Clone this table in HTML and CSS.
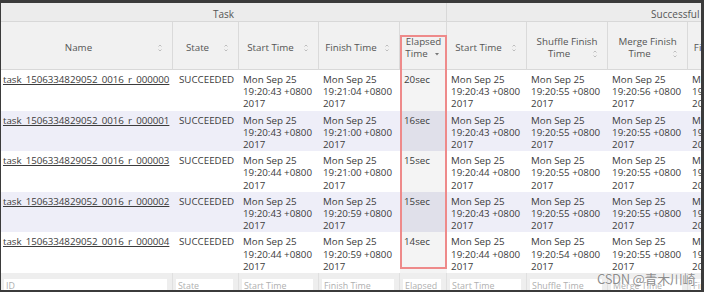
FILE: index.html
```html
<!DOCTYPE html>
<html>
<head>
<meta charset="utf-8">
<link rel="stylesheet" href="styles.css">
</head>
<body>
<div class="frame">
  <table class="grid">
    <colgroup>
      <col class="c-name"><col class="c-state"><col class="c-time"><col class="c-time2"><col class="c-el">
      <col class="c-time"><col class="c-time2"><col class="c-time"><col class="c-time"><col class="c-el"><col class="c-x1"><col class="c-x2">
    </colgroup>
    <thead>
      <tr class="grp">
        <th colspan="5">Task</th>
        <th colspan="7">Successful Attempt</th>
      </tr>
      <tr class="hdr">
        <th><div class="sw">Name<span class="ic"><svg width="16" height="12" viewBox="0 0 16 12"><path d="M6.5 4.5 L8 3 L9.5 4.5 M6.5 7.5 L8 9 L9.5 7.5" fill="none" stroke="#b8b8b8" stroke-width="0.9"/></svg></span></div></th>
        <th><div class="sw">State<span class="ic"><svg width="16" height="12" viewBox="0 0 16 12"><path d="M6.5 4.5 L8 3 L9.5 4.5 M6.5 7.5 L8 9 L9.5 7.5" fill="none" stroke="#b8b8b8" stroke-width="0.9"/></svg></span></div></th>
        <th><div class="sw">Start Time<span class="ic"><svg width="16" height="12" viewBox="0 0 16 12"><path d="M6.5 4.5 L8 3 L9.5 4.5 M6.5 7.5 L8 9 L9.5 7.5" fill="none" stroke="#b8b8b8" stroke-width="0.9"/></svg></span></div></th>
        <th><div class="sw">Finish Time<span class="ic"><svg width="16" height="12" viewBox="0 0 16 12"><path d="M6.5 4.5 L8 3 L9.5 4.5 M6.5 7.5 L8 9 L9.5 7.5" fill="none" stroke="#b8b8b8" stroke-width="0.9"/></svg></span></div></th>
        <th class="elh"><div class="sw">Elapsed Time<span class="ic ic-s"><svg width="14" height="12" viewBox="0 0 14 12"><path d="M5 5 L9 5 L7 7.5 Z" fill="#777"/></svg></span></div></th>
        <th><div class="sw">Start Time<span class="ic"><svg width="16" height="12" viewBox="0 0 16 12"><path d="M6.5 4.5 L8 3 L9.5 4.5 M6.5 7.5 L8 9 L9.5 7.5" fill="none" stroke="#b8b8b8" stroke-width="0.9"/></svg></span></div></th>
        <th><div class="sw">Shuffle Finish Time<span class="ic"><svg width="16" height="12" viewBox="0 0 16 12"><path d="M6.5 4.5 L8 3 L9.5 4.5 M6.5 7.5 L8 9 L9.5 7.5" fill="none" stroke="#b8b8b8" stroke-width="0.9"/></svg></span></div></th>
        <th><div class="sw">Merge Finish Time<span class="ic"><svg width="16" height="12" viewBox="0 0 16 12"><path d="M6.5 4.5 L8 3 L9.5 4.5 M6.5 7.5 L8 9 L9.5 7.5" fill="none" stroke="#b8b8b8" stroke-width="0.9"/></svg></span></div></th>
        <th><div class="sw">Finish Time<span class="ic"><svg width="16" height="12" viewBox="0 0 16 12"><path d="M6.5 4.5 L8 3 L9.5 4.5 M6.5 7.5 L8 9 L9.5 7.5" fill="none" stroke="#b8b8b8" stroke-width="0.9"/></svg></span></div></th>
        <th><div class="sw">Elapsed Time</div></th>
        <th><div class="sw">Shuffle Time</div></th>
        <th><div class="sw">Merge Time</div></th>
      </tr>
    </thead>
    <tbody>
      <tr class="row odd">
        <td class="name"><a href="#">task_1506334829052_0016_r_000000</a></td>
        <td class="st">SUCCEEDED</td>
        <td>Mon Sep 25 19:20:43 +0800 2017</td>
        <td>Mon Sep 25 19:21:04 +0800 2017</td>
        <td class="el">20sec</td>
        <td>Mon Sep 25 19:20:43 +0800 2017</td>
        <td>Mon Sep 25 19:20:55 +0800 2017</td>
        <td>Mon Sep 25 19:20:56 +0800 2017</td>
        <td>Mon Sep 25 19:21:04 +0800 2017</td>
        <td>8sec</td><td>1sec</td><td>8sec</td>
      </tr>
      <tr class="row even">
        <td class="name"><a href="#">task_1506334829052_0016_r_000001</a></td>
        <td class="st">SUCCEEDED</td>
        <td>Mon Sep 25 19:20:43 +0800 2017</td>
        <td>Mon Sep 25 19:21:00 +0800 2017</td>
        <td class="el">16sec</td>
        <td>Mon Sep 25 19:20:43 +0800 2017</td>
        <td>Mon Sep 25 19:20:55 +0800 2017</td>
        <td>Mon Sep 25 19:20:55 +0800 2017</td>
        <td>Mon Sep 25 19:21:00 +0800 2017</td>
        <td>12sec</td><td>0sec</td><td>4sec</td>
      </tr>
      <tr class="row odd">
        <td class="name"><a href="#">task_1506334829052_0016_r_000003</a></td>
        <td class="st">SUCCEEDED</td>
        <td>Mon Sep 25 19:20:44 +0800 2017</td>
        <td>Mon Sep 25 19:21:00 +0800 2017</td>
        <td class="el">15sec</td>
        <td>Mon Sep 25 19:20:44 +0800 2017</td>
        <td>Mon Sep 25 19:20:55 +0800 2017</td>
        <td>Mon Sep 25 19:20:55 +0800 2017</td>
        <td>Mon Sep 25 19:21:00 +0800 2017</td>
        <td>11sec</td><td>0sec</td><td>4sec</td>
      </tr>
      <tr class="row even">
        <td class="name"><a href="#">task_1506334829052_0016_r_000002</a></td>
        <td class="st">SUCCEEDED</td>
        <td>Mon Sep 25 19:20:43 +0800 2017</td>
        <td>Mon Sep 25 19:20:59 +0800 2017</td>
        <td class="el">15sec</td>
        <td>Mon Sep 25 19:20:43 +0800 2017</td>
        <td>Mon Sep 25 19:20:55 +0800 2017</td>
        <td>Mon Sep 25 19:20:55 +0800 2017</td>
        <td>Mon Sep 25 19:20:59 +0800 2017</td>
        <td>12sec</td><td>0sec</td><td>3sec</td>
      </tr>
      <tr class="row odd">
        <td class="name"><a href="#">task_1506334829052_0016_r_000004</a></td>
        <td class="st">SUCCEEDED</td>
        <td>Mon Sep 25 19:20:44 +0800 2017</td>
        <td>Mon Sep 25 19:20:59 +0800 2017</td>
        <td class="el">14sec</td>
        <td>Mon Sep 25 19:20:44 +0800 2017</td>
        <td>Mon Sep 25 19:20:54 +0800 2017</td>
        <td>Mon Sep 25 19:20:55 +0800 2017</td>
        <td>Mon Sep 25 19:20:59 +0800 2017</td>
        <td>10sec</td><td>0sec</td><td>4sec</td>
      </tr>
    </tbody>
    <tfoot>
      <tr class="flt">
        <td><input class="fi" placeholder="ID"></td>
        <td><input class="fi" placeholder="State"></td>
        <td><input class="fi" placeholder="Start Time"></td>
        <td><input class="fi" placeholder="Finish Time"></td>
        <td><input class="fi" placeholder="Elapsed"></td>
        <td><input class="fi" placeholder="Start Time"></td>
        <td><input class="fi" placeholder="Shuffle Time"></td>
        <td><input class="fi" placeholder="Merge Time"></td>
        <td><input class="fi" placeholder="Finish Time"></td>
        <td><input class="fi" placeholder="Elapsed"></td>
        <td><input class="fi" placeholder="Shuffle"></td>
        <td><input class="fi" placeholder="Merge"></td>
      </tr>
    </tfoot>
  </table>
  <div class="mark"></div>
  <div class="wm">CSDN @青木川崎</div>
</div>
</body>
</html>
```
FILE: styles.css
```css
html, body {
  margin: 0;
  padding: 0;
  background: #ffffff;
}

.frame {
  position: relative;
  width: 700px;
  height: 287px;
  border-style: solid;
  border-color: #3b3b3b;
  border-width: 3px 3px 2px 1px;
  overflow: hidden;
  background: #ffffff;
}

.grid {
  table-layout: fixed;
  width: 944px;
  border-collapse: separate;
  border-spacing: 0;
  font-family: "Open Sans", "Liberation Sans", sans-serif;
  font-size: 9.75px;
  line-height: 12.2px;
  color: #3c3c3c;
}

.c-name { width: 172px; }
.c-state { width: 66px; }
.c-time { width: 80px; }
.c-time2 { width: 81px; }
.c-el { width: 47px; }
.c-x1 { width: 60px; }
.c-x2 { width: 70px; }

.grp th {
  height: 19px;
  padding: 5px 0 0 0;
  box-sizing: border-box;
  font-weight: normal;
  color: #555;
  background: #ececec;
  border-bottom: 1px solid #d8d8d8;
  border-right: 1px solid #d8d8d8;
  text-align: center;
  font-size: 10px;
}

.hdr th {
  height: 48px;
  box-sizing: border-box;
  padding: 5px 4px 0 4px;
  font-weight: normal;
  color: #555;
  background: #f1f1f1;
  border-right: 1px solid #dadada;
  border-bottom: 1px solid #d8d8d8;
  vertical-align: middle;
  text-align: center;
}

.hdr th.elh {
  padding: 5px 2px 0 3px;
}

.sw {
  text-align: center;
}

.ic {
  float: right;
  width: 16px;
  height: 12px;
}

.ic.ic-s {
  width: 14px;
}

.ic svg {
  display: block;
}

.row {
  height: 39.2px;
}

.row td {
  padding: 4px 3px 0 4px;
  vertical-align: top;
  overflow: hidden;
}

.odd td { background: #ffffff; }
.even td { background: #eeeef8; }
.odd td.el { background: #f4f4f4; }
.even td.el { background: #e0e0ea; }

.row td.name {
  padding-left: 2px;
  white-space: nowrap;
}

.name a {
  color: #3c3c3c;
  text-decoration: underline;
  letter-spacing: -0.05px;
}

.row td.st {
  padding-left: 6px;
}

.flt td {
  height: 24px;
  box-sizing: border-box;
  padding: 6px 5px 0 3px;
  vertical-align: top;
  background: #eeeeee;
  border-right: 1px solid #e0e0e0;
}

.fi {
  display: block;
  width: 100%;
  height: 13px;
  box-sizing: border-box;
  margin: 0;
  padding: 0 2px;
  border: none;
  background: #ffffff;
  font-family: "Open Sans", "Liberation Sans", sans-serif;
  font-size: 8.9px;
  color: #555;
}

.fi::placeholder {
  color: #b0b0b0;
}

.mark {
  position: absolute;
  left: 399px;
  top: 32px;
  width: 43px;
  height: 230px;
  border: 2px solid #ee8a8a;
}

.wm {
  position: absolute;
  left: 596px;
  top: 268px;
  font-family: "Noto Sans CJK SC", "Noto Sans", sans-serif;
  font-size: 13px;
  line-height: 16px;
  color: #8d8d8d;
  letter-spacing: -0.3px;
  white-space: nowrap;
  text-shadow: 0 0 1px #ffffff, 0 0 1px #ffffff;
}
```
